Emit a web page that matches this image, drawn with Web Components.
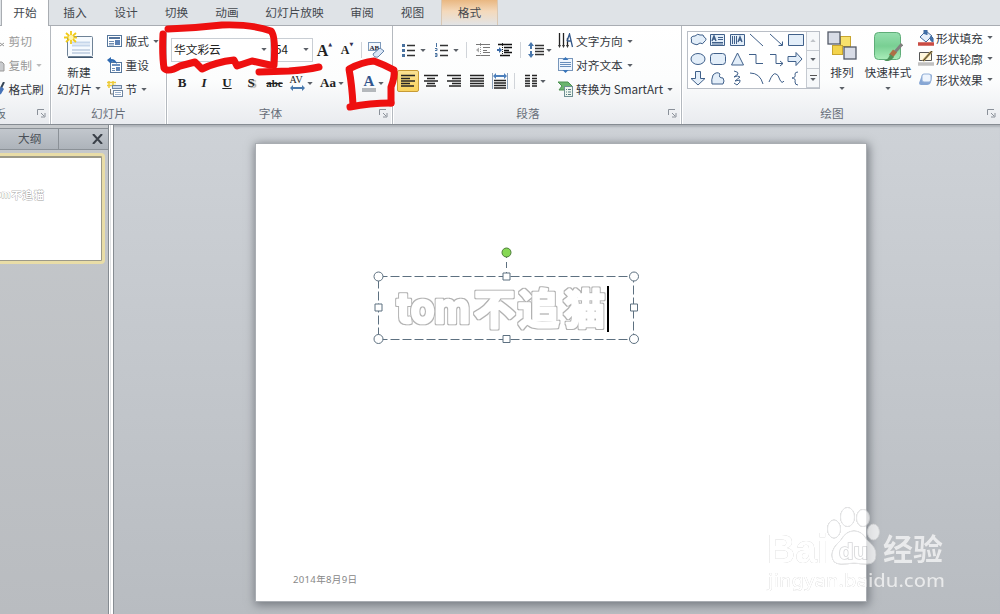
<!DOCTYPE html>
<html lang="zh-CN">
<head>
<meta charset="utf-8">
<title>PowerPoint</title>
<style>
  body {
    margin: 0;
    width: 1000px;
    height: 614px;
    overflow: hidden;
    font: 11.7px/16px "Noto Sans CJK SC", sans-serif;
    color: #3b3f45;
  }
</style>
</head>
<body>
<ppt-window></ppt-window>
<script>
'use strict';

// name: [width, height, markup]
const ICONS = {
  cut: [8, 14, '<path d="M0 9l4 3M0 12l4-3" stroke="#999"/>'],
  copy: [8, 14, '<path d="M-4 4h6l2 2v7h-8z" fill="#c9cbce" stroke="#999"/>'],
  brush: [8, 14, '<path d="M4 0L1 6" stroke="#345" stroke-width="2"/><path d="M-3 7l5-2 2 2-3 5-4 2z" fill="#4673b8"/>'],
  launcher: [9, 9, '<path d="M.5 6V.5H7M4 4l3 3M8 4v4H4" fill="none" stroke="#8a9099"/>'],
  newslide: [30, 28, '<rect x="3.5" y="5.5" width="25" height="20" rx="1" fill="#f6fafe" stroke="#6e8296"/><path d="M4 26.5h25" stroke="#40566e"/><path d="M8 11.5h18M8 14.5h18" stroke="#c6d6ea" stroke-width="2"/><path d="M8 19h18M8 22h18" stroke="#9eb3cf"/><path d="M7 0v13M0 6.5h13M2 2l10 9M12 2L2 11" stroke="#f2cb17" stroke-width="1.8"/><circle cx="7" cy="6.5" r="2.5" fill="#fff5b0"/>'],
  layout: [16, 14, '<rect x=".5" y="1.5" width="14" height="11" fill="#fff" stroke="#56779c"/><path d="M2 4h11" stroke="#54739b" stroke-width="2"/><path d="M2 7.5h5M2 9.5h5M2 11h5" stroke="#6f8db1"/><rect x="8" y="6" width="5" height="5" fill="#5d82b5"/>'],
  reset: [16, 16, '<rect x="3.5" y="5.5" width="11" height="10" fill="#fff" stroke="#56779c"/><path d="M5 8h8" stroke="#6d91bf" stroke-width="2"/><path d="M5 11.5h3M5 13.5h3" stroke="#6f8db1"/><rect x="9" y="10" width="4" height="4" fill="#6287b8"/><path d="M0 3l4-3v2q5 0 6 5-3-3-6-2v2z" fill="#2f6ab1"/>'],
  section: [16, 16, '<path d="M0 1.5h9M0 4.5h9M2 0v7M6 0v7" stroke="#edcb38" stroke-width="1.5"/><rect x="5.500" y="4.5" width="9" height="3" fill="#cfdcf0" stroke="#6e86a3"/><rect x="6.500" y="9.500" width="9" height="6" fill="#fff" stroke="#6e86a3"/><path d="M8 11.5h6M8 13.5h6" stroke="#9bb1cd"/><path d="M3.500 8v5H6" fill="none" stroke="#777"/>'],
  eraser: [18, 18, '<rect x=".5" y="1.500" width="12" height="8" fill="#f3f8fd" stroke="#7e9abb"/><text x="1.500" y="8.500" font-size="7" font-weight="bold" font-family="Liberation Serif" fill="#223">AB</text><path d="M5 13l7-6 4 3-6 6q-4 1-5-3z" fill="#dbe7f7" stroke="#6585aa"/>'],
  bullets: [14, 14, '<path d="M1 1h3v3H1zM1 6h3v3H1zM1 11h3v3H1z" fill="#48719f"/><path d="M6 2.500h8M6 7.500h8M6 12.500h8" stroke="#333" stroke-width="1.300"/>'],
  numbers: [14, 14, '<path d="M2.500 0v4M1 5.500h2v2H1M1 10.500h2v3H1M1 12h2" fill="none" stroke="#48719f"/><path d="M6 2.500h8M6 7.500h8M6 12.500h8" stroke="#333" stroke-width="1.300"/>'],
  outdent: [16, 14, '<path d="M1 1.500h14M8 4.500h7M8 7.500h4M8 9.500h7M1 12.500h14" stroke="#777"/><path d="M5.500 0v14" stroke="#999" stroke-dasharray="1 1"/><path d="M1 7l3-2.500v5z" fill="#aaa"/>'],
  indent: [16, 14, '<path d="M1 1.500h14M7 4.500h8M7 7.500h5M7 9.500h8M3 12.500h10" stroke="#111" stroke-width="1.700"/><path d="M5.500 0v14" stroke="#222" stroke-dasharray="1 1"/><path d="M5 7L2 4v2H0v2h2v2z" fill="#3d6ca8"/>'],
  spacing: [16, 16, '<path d="M3 0l3 4H4v3H2V4H0zM3 16l3-4H4V9H2v3H0z" fill="#4977ab"/><path d="M7 3.500h9M7 6.500h9M7 9.500h9M7 12.500h9" stroke="#333" stroke-width="1.300"/>'],
  left: [16, 14, '<path d="M1 1.500h14M1 4.500h9M1 7h14M1 9.500h9M1 12h13" stroke="#252525" stroke-width="1.500"/>'],
  center: [16, 14, '<path d="M1 1.500h14M4 4.500h8M1 7h14M4 9.500h8M3 12h10" stroke="#252525" stroke-width="1.500"/>'],
  right: [16, 14, '<path d="M1 1.500h14M6 4.500h9M1 7h14M6 9.500h9M3 12h12" stroke="#252525" stroke-width="1.500"/>'],
  justify: [16, 14, '<path d="M1 1.500h14M1 4.500h14M1 7h14M1 9.500h14M1 12h14" stroke="#252525" stroke-width="1.500"/>'],
  distribute: [16, 16, '<path d="M.5 0v16M15.500 0v16" stroke="#8ba1bb"/><path d="M1 3l3-3v2h8V0l3 3-3 3V4H4v2z" fill="#4b7fbc"/><path d="M2 7.500h12M2 10h12M2 12.500h12M2 15h12" stroke="#222" stroke-width="1.400"/>'],
  columns: [14, 14, '<path d="M1 1.500h5M1 4.500h5M1 7h5M1 9.500h5M1 12h5M8 1.500h5M8 4.500h5M8 7h5M8 9.500h5M8 12h5" stroke="#252525" stroke-width="1.500"/>'],
  direction: [16, 16, '<path d="M1.500 0v12M5.500 0v12M9.500 5v8" stroke="#222" stroke-width="1.300"/><path d="M0 12h3l-1.500 3zM4 12h3l-1.500 3zM8 12h3l-1.500 3z" fill="#333"/><path d="M9 8l2.500-7L14.500 14M9 8h4" fill="none" stroke="#34588a" stroke-width="1.300"/>'],
  align: [16, 16, '<rect x=".5" y="1.500" width="14" height="12" fill="#eef5fd" stroke="#7796bb"/><path d="M2 5.500h11M2 7.500h11M2 9.500h11" stroke="#668dbb"/><path d="M7.500 0l3 3h-6zM7.500 16l3-3h-6z" fill="#3976ba"/>'],
  smartart: [16, 16, '<path d="M0 1h10l4 4-3 4H1l3-4z" fill="#6ab56e" stroke="#4c9253"/><rect x="6.500" y="5.500" width="8" height="10" fill="#eef7ef" stroke="#6f8f94"/><path d="M8 8.500h1M10 8.500h3M8 11h1M10 11h3M8 13.500h1M10 13.500h3" stroke="#567b83"/>'],
  arrange: [30, 30, '<rect x="13.500" y="5.500" width="10" height="10" fill="#f8e16c" stroke="#c8a52e"/><rect x="5.500" y="14.500" width="10" height="9" fill="#f3d34b" stroke="#c8a52e"/><rect x="1" y="1" width="12" height="12" fill="#d8dce6" stroke="#545a68" stroke-width="1.300"/><rect x="17" y="16" width="12" height="12" fill="#d8dce6" stroke="#545a68" stroke-width="1.300"/>'],
  styles: [30, 30, '<defs><linearGradient id="g" x2="0" y2="1"><stop stop-color="#96dfaf"/><stop offset=".5" stop-color="#79cf93"/><stop offset="1" stop-color="#a9edb9"/></linearGradient></defs><rect x="1.500" y="1.500" width="26" height="27" rx="4" fill="url(#g)" stroke="#5fad78"/><path d="M29 13L22 21" stroke="#817f7d" stroke-width="3"/><path d="M22 20l-4 5" stroke="#ad6f45" stroke-width="5"/><path d="M11 30q5-2 6-7l4 3q-3 5-10 4z" fill="#4d9359"/>'],
  fill: [16, 16, '<path d="M2 7l6-6 6 5-6 6z" fill="#e6effa" stroke="#426a9d"/><path d="M6 4V0h3v5M13 6q3 1 2 6-3-1-3-4z" fill="#3e71ad" stroke="#426a9d"/><path d="M0 14h16" stroke="#c94b43" stroke-width="3.500"/>'],
  outline: [16, 16, '<path d="M1.500 1.500h12v8h-12z" fill="#fff8df" stroke="#555"/><path d="M14 0L5 10" stroke="#c0a45a" stroke-width="2.500"/><path d="M14 0L5 10" stroke="#3d3d3d"/><path d="M0 13h16" stroke="#c0c0c0" stroke-width="3.500"/>'],
  effect: [16, 16, '<path d="M1 11L4 3q1-1 3-1h5q2 0 2 2l-1 6q-1 3-4 3H3q-2 0-2-2z" fill="#86a6d4"/><rect x="4" y="2" width="9" height="8" rx="2" fill="#edf4fd" stroke="#93b0d8"/>']
};

const GALLERY = [
  '<path d="M4 12q-4-1-2.500-4Q0 4 5 4q3-3 5-1 4-1 4 2 4 2 0 5-1 3-4 1-3 3-6 1z"/>',
  '<path d="M1.500 2.500h14v11h-14z"/><path d="M9 5.500h5M9 7.500h5M3 10.500h11M3 12h11"/><path d="M3 9l2-5 2 5M4 7h2" stroke-width="1.400"/>',
  '<path d="M1.500 2.500h14v11h-14z"/><path d="M3.500 4v8M5.500 4v8M7.500 4v8"/><path d="M9 10l2-5 2 5M10 8h2" stroke-width="1.400"/>',
  '<path d="M2 2l13 12"/>',
  '<path d="M2 2l12 11M14.500 9.500v4h-4"/>',
  '<path d="M1.500 2.500h15v11h-15z"/>',
  '<ellipse cx="8" cy="8" rx="7" ry="5.500"/>',
  '<rect x="1.500" y="2.500" width="15" height="11" rx="3"/>',
  '<path d="M8.500 2l6 12h-12z"/>',
  '<path d="M1 3.500h7v9h7" fill="none"/>',
  '<path d="M2 3.500h6v9h7M12 10l3 2.500-3 2.500" fill="none"/>',
  '<path d="M1 5.500h8V1.500L15 8l-6 6.500v-4H1z"/>',
  '<path d="M5.500 1.500h5v7H15L8 15 1 8.500h4.500z"/>',
  '<path d="M3 14q-1-4 1-9 4-4 7-1-2 4 3 4 2 3 0 6z"/>',
  '<path d="M5 1q5 1 4 3L5 7q4-2 6 0L6 11l5-1q1 2-3 5l-3-2" fill="none"/>',
  '<path d="M2 3q10 0 13 11" fill="none"/>',
  '<path d="M1 12q4-10 7-8 2 0 4 6 2 4 4 1" fill="none"/>',
  '<path d="M11 2q-3 0-3 2 1 4-3 4 4 0 3 4 0 3 3 3" fill="none"/>'
];

class UiIcon extends HTMLElement {
  constructor() {
    super();
    this.root = this.attachShadow({mode: 'open'});
  }
  connectedCallback() {
    const [w, h, markup] = ICONS[this.getAttribute('name')];
    this.root.innerHTML = `
  <style>
    :host { display: inline-block; flex: none; width: ${w}px; height: ${h}px; }
    svg { display: block; }
  </style>
  <svg width="${w}" height="${h}" fill="none">${markup}</svg>
    `;
  }
}
customElements.define('ui-icon', UiIcon);

class DropArrow extends HTMLElement {
  constructor() {
    super();
    this.attachShadow({mode: 'open'}).innerHTML = `
  <style>
    :host {
      display: flex;
      flex: none;
      width: 6px;
    }
    svg { display: block; fill: var(--arrow, #5b6067); }
  </style>
  <svg width="6" height="3"><path d="M.3 0h5.400L3 3z"/></svg>
    `;
  }
}
customElements.define('drop-arrow', DropArrow);

class RibbonTab extends HTMLElement {
  constructor() {
    super();
    this.attachShadow({mode: 'open'}).innerHTML = `
  <style>
    :host {
      display: flex;
      justify-content: center;
      box-sizing: border-box;
      height: 25px;
      padding-top: 4px;
      color: #44484e;
    }
    :host([active]) {
      height: 26px;
      background: #fff;
      border: solid #a9adb2;
      border-width: 0 1px;
      margin-left: 1px;
    }
    :host([context]) {
      background: linear-gradient(#e9b781, #f4d9bb 45%, #e2e4e6);
      border: solid #d9c8b4;
      border-width: 0 1px;
      margin-left: 3px;
    }
  </style>
  <slot></slot>
    `;
  }
}
customElements.define('ribbon-tab', RibbonTab);

class RibbonGroup extends HTMLElement {
  constructor() {
    super();
    this.root = this.attachShadow({mode: 'open'});
  }
  connectedCallback() {
    this.root.innerHTML = `
  <style>
    :host {
      display: grid;
      grid-template-rows: 79px 16px;
      box-sizing: border-box;
      flex: none;
      height: 98px;
      border-right: 1px solid #b4b9bf;
      box-shadow: inset -1px 0 #fff, 1px 0 #fff;
    }
    :host(:last-child) { border-right: 0; box-shadow: none; }
    .body { display: flex; }
    footer {
      display: grid;
      grid-template-columns: 1fr 13px;
      align-items: center;
      color: #666d78;
    }
    .label { text-align: center; white-space: nowrap; padding-right: 5px; }
    :host([plain]) .label { padding: 0; }
    :host([plain]) footer { grid-template-columns: 1fr; }
    :host([plain]) ui-icon { display: none; }
    :host([clipped]) footer { grid-template-columns: 37px 1fr; }
    :host([clipped]) .label { direction: rtl; width: 6px; padding: 0; }
  </style>
  <div class="body"><slot></slot></div>
  <footer>
    <span class="label">${this.getAttribute('label')}</span>
    <ui-icon name="launcher"></ui-icon>
  </footer>
    `;
  }
}
customElements.define('ribbon-group', RibbonGroup);

class SmallButton extends HTMLElement {
  constructor() {
    super();
    this.root = this.attachShadow({mode: 'open'});
  }
  connectedCallback() {
    this.root.innerHTML = `
  <style>
    :host { display: flex; align-items: center; height: 24px; white-space: nowrap; color: #33373d; }
    :host([disabled]) { color: #999; --arrow: #bbb; }
    .icon { display: flex; width: var(--icon-width, 18.5px); }
    drop-arrow { margin-left: 4px; }
  </style>
  <span class="icon"><ui-icon name="${this.getAttribute('icon')}"></ui-icon></span>
  <slot></slot>
  ${this.hasAttribute('arrow') ? '<drop-arrow></drop-arrow>' : ''}
    `;
  }
}
customElements.define('small-button', SmallButton);

class LargeButton extends HTMLElement {
  constructor() {
    super();
    this.root = this.attachShadow({mode: 'open'});
  }
  connectedCallback() {
    this.root.innerHTML = `
  <style>
    :host {
      display: flex;
      flex-direction: column;
      align-items: center;
      padding-top: 5px;
      white-space: nowrap;
      color: #33373d;
    }
    .icon { height: 33px; }
    .last { display: flex; align-items: center; gap: 3px; height: 17px; }
  </style>
  <span class="icon"><ui-icon name="${this.getAttribute('icon')}"></ui-icon></span>
  <slot></slot>
  <span class="last"><slot name="second"></slot><drop-arrow></drop-arrow></span>
    `;
  }
}
customElements.define('large-button', LargeButton);

class FontTools extends HTMLElement {
  constructor() {
    super();
    this.attachShadow({mode: 'open'}).innerHTML = `
  <style>
    :host { display: block; padding: 12px 0 0 4px; color: #222; }
    .row { display: grid; align-items: center; height: 22px; }
    .first { grid-template-columns: 100px 42px 23px 22px 7px 24px; }
    .second {
      grid-template-columns: 22px 22px 24px 24px 23px 30px 32px 9px 32px;
      height: 24px;
      margin-top: 11px;
      font: bold 13px/16px "Liberation Serif", serif;
    }
    .row > * { justify-self: center; }
    .box {
      display: flex;
      justify-self: stretch;
      justify-content: space-between;
      align-items: center;
      box-sizing: border-box;
      height: 24px;
      padding: 0 3px 2px 2px;
      border: 1px solid #c9ced4;
      background: #fff;
    }
    .size { margin-left: -1px; padding-left: 4px; }
    .grow, .shrink { display: flex; font: bold 16px/19px "Liberation Serif", serif; }
    .shrink { font-size: 12px; }
    sup { font: 5px/7px "DejaVu Sans"; color: #335; }
    .sep { width: 1px; height: 16px; background: #d0d4d9; }
    .sub { display: flex; align-items: center; gap: 2px; }
    .shadow { text-shadow: 2px 1px 1px #999; }
    .strike { font-size: 11px; text-decoration: line-through; }
    .av { display: grid; font-size: 10px; line-height: 10px; font-weight: normal; }
    .color { line-height: 13px; font-size: 15px; color: #31558d; border-bottom: 4px solid #b4b8bc; padding: 0 2px; }
  </style>
  <div class="row first">
    <span class="box">华文彩云<drop-arrow></drop-arrow></span>
    <span class="box size">54<drop-arrow></drop-arrow></span>
    <span class="grow">A<sup>▲</sup></span>
    <span class="shrink">A<sup>▼</sup></span>
    <span class="sep"></span>
    <ui-icon name="eraser"></ui-icon>
  </div>
  <div class="row second">
    <span>B</span>
    <i>I</i>
    <u>U</u>
    <span class="shadow">S</span>
    <span class="strike">abc</span>
    <span class="sub">
      <span class="av">AV<svg width="15" height="6"><path d="M0 3l3-3v2h9V0l3 3-3 3V4H3v2z" fill="#4778ac"/></svg></span>
      <drop-arrow></drop-arrow>
    </span>
    <span class="sub">Aa<drop-arrow></drop-arrow></span>
    <span></span>
    <span class="sub"><span class="color">A</span><drop-arrow></drop-arrow></span>
  </div>
    `;
  }
}
customElements.define('font-tools', FontTools);

class ParagraphTools extends HTMLElement {
  constructor() {
    super();
    this.attachShadow({mode: 'open'}).innerHTML = `
  <style>
    :host { display: block; width: 160px; padding-top: 12px; }
    .row { display: grid; align-items: center; height: 24px; }
    .first { grid-template-columns: 33px 32px 9px 23px 21px 10px 30px; padding-left: 4px; }
    .second { grid-template-columns: 22px 23px 23px 23px 23px 7px 33px; padding-left: 4px; margin-top: 7px; }
    .row > * { justify-self: center; }
    .sub { display: flex; align-items: center; gap: 5px; }
    .near { gap: 2px; }
    .sep { width: 1px; height: 16px; background: #d0d4d9; }
    .on {
      padding: 3px 2px;
      border: 1px solid #c79b36;
      border-radius: 2px;
      background: linear-gradient(#fae193, #f9d35d);
      line-height: 0;
    }
  </style>
  <div class="row first">
    <span class="sub"><ui-icon name="bullets"></ui-icon><drop-arrow></drop-arrow></span>
    <span class="sub"><ui-icon name="numbers"></ui-icon><drop-arrow></drop-arrow></span>
    <span class="sep"></span>
    <ui-icon name="outdent"></ui-icon>
    <ui-icon name="indent"></ui-icon>
    <span class="sep"></span>
    <span class="sub near"><ui-icon name="spacing"></ui-icon><drop-arrow></drop-arrow></span>
  </div>
  <div class="row second">
    <span class="on"><ui-icon name="left"></ui-icon></span>
    <ui-icon name="center"></ui-icon>
    <ui-icon name="right"></ui-icon>
    <ui-icon name="justify"></ui-icon>
    <ui-icon name="distribute"></ui-icon>
    <span class="sep"></span>
    <span class="sub near"><ui-icon name="columns"></ui-icon><drop-arrow></drop-arrow></span>
  </div>
    `;
  }
}
customElements.define('paragraph-tools', ParagraphTools);

class ShapeGallery extends HTMLElement {
  constructor() {
    super();
    this.attachShadow({mode: 'open'}).innerHTML = `
  <style>
    :host {
      display: flex;
      box-sizing: border-box;
      width: 133px;
      height: 58px;
      margin: 5px 0 0 5px;
      border: 1px solid #b9bec6;
      background: #fff;
    }
    .shapes { display: grid; grid-template: repeat(3, 19px) / repeat(6, 19.4px); padding-left: 2px; }
    .shapes svg { width: 18px; height: 17px; fill: #e3eef9; stroke: #40608a; }
    .scroll { display: grid; grid-template-rows: repeat(3, 1fr); width: 14px; margin-left: auto; }
    .scroll span { display: grid; place-content: center; justify-items: center; gap: 2px; border: solid #c5cad1; border-width: 0 0 1px 1px; background: #f6f8fa; }
    .up { transform: rotate(180deg); --arrow: #c0c4c9; }
    hr { width: 7px; margin: 0; border: 0; border-top: 1px solid #555; }
  </style>
  <div class="shapes">${GALLERY.map(shape => `<svg>${shape}</svg>`).join('')}</div>
  <div class="scroll">
    <span><drop-arrow class="up"></drop-arrow></span>
    <span><drop-arrow></drop-arrow></span>
    <span><hr><drop-arrow></drop-arrow></span>
  </div>
    `;
  }
}
customElements.define('shape-gallery', ShapeGallery);

class PptRibbon extends HTMLElement {
  constructor() {
    super();
    this.attachShadow({mode: 'open'}).innerHTML = `
  <style>
    :host { display: block; height: 125px; box-sizing: border-box; border-bottom: 1px solid #868c93; }
    nav { display: flex; height: 25px; background: #dfe3e7; border-bottom: 1px solid #a9adb3; }
    .groups { display: flex; height: 98px; background: linear-gradient(#fff, #fcfdfd 55%, #e9ebef); }
    .stack { padding-top: 3px; }
    .draw { padding-top: 1px; }
    .draw small-button { height: 21px; }
    .clip small-button { --icon-width: 8.5px; }
  </style>
  <nav>
    <ribbon-tab active style="width:48px">开始</ribbon-tab>
    <ribbon-tab style="width:52px">插入</ribbon-tab>
    <ribbon-tab style="width:50px">设计</ribbon-tab>
    <ribbon-tab style="width:51px">切换</ribbon-tab>
    <ribbon-tab style="width:50px">动画</ribbon-tab>
    <ribbon-tab style="width:85px">幻灯片放映</ribbon-tab>
    <ribbon-tab style="width:50px">审阅</ribbon-tab>
    <ribbon-tab style="width:51px">视图</ribbon-tab>
    <ribbon-tab context style="width:57px">格式</ribbon-tab>
  </nav>
  <div class="groups">
    <ribbon-group clipped label="板" style="width:51px">
      <div class="stack clip">
        <small-button disabled icon="cut">剪切</small-button>
        <small-button disabled icon="copy" arrow>复制</small-button>
        <small-button icon="brush">格式刷</small-button>
      </div>
    </ribbon-group>
    <ribbon-group plain label="幻灯片" style="width:116px">
      <large-button icon="newslide" style="width:56px">新建<span slot="second">幻灯片</span></large-button>
      <div class="stack">
        <small-button icon="layout" arrow>版式</small-button>
        <small-button icon="reset">重设</small-button>
        <small-button icon="section" arrow>节</small-button>
      </div>
    </ribbon-group>
    <ribbon-group label="字体" style="width:226px">
      <font-tools></font-tools>
    </ribbon-group>
    <ribbon-group label="段落" style="width:289px">
      <paragraph-tools></paragraph-tools>
      <div class="stack" style="padding-left:4.500px">
        <small-button icon="direction" arrow>文字方向</small-button>
        <small-button icon="align" arrow>对齐文本</small-button>
        <small-button icon="smartart" arrow>转换为 SmartArt</small-button>
      </div>
    </ribbon-group>
    <ribbon-group label="绘图" style="width:318px">
      <shape-gallery></shape-gallery>
      <large-button icon="arrange" style="width:44px">排列</large-button>
      <large-button icon="styles" style="width:48px">快速样式</large-button>
      <div class="draw" style="padding-left:5.500px">
        <small-button icon="fill" arrow>形状填充</small-button>
        <small-button icon="outline" arrow>形状轮廓</small-button>
        <small-button icon="effect" arrow>形状效果</small-button>
      </div>
    </ribbon-group>
  </div>
    `;
  }
}
customElements.define('ppt-ribbon', PptRibbon);

// Hollow lettering: the grown silhouette in grey, the glyphs in white over it
class HollowWord extends HTMLElement {
  constructor() {
    super();
    this.attachShadow({mode: 'open'}).innerHTML = `
  <style>
    :host { display: block; }
    svg { display: block; overflow: visible; }
    text {
      fill: #fff;
      stroke: #fff;
      stroke-width: 2.6px;
      stroke-linejoin: round;
      font-weight: 700;
    }
    .latin { font-family: Inter, sans-serif; font-size: 42px; }
    .han { font-family: "Noto Sans CJK SC", sans-serif; font-size: 41px; }
    :host([small]) text { fill: #fff; stroke: #a4a4a4; stroke-width: 3px; paint-order: stroke; }
    :host([small]) g { filter: none; }
  </style>
  <svg width="212" height="46" viewBox="0 0 212 46">
    <filter id="rim" x="-5%" y="-20%" width="110%" height="140%">
      <feMorphology in="SourceAlpha" operator="dilate" radius="1" result="grown"/>
      <feFlood flood-color="#b2b2b2"/>
      <feComposite in2="grown" operator="in" result="rim"/>
      <feMerge><feMergeNode in="rim"/><feMergeNode in="SourceGraphic"/></feMerge>
    </filter>
    <g filter="url(#rim)">
      <text class="latin" x="4" y="37" textLength="73" lengthAdjust="spacingAndGlyphs">tom</text>
      <text class="han" x="81" y="38">不</text>
      <text class="han" x="125" y="38">追</text>
      <text class="han" x="171" y="38">猫</text>
    </g>
  </svg>
    `;
  }
}
customElements.define('hollow-word', HollowWord);

class SlidePanel extends HTMLElement {
  constructor() {
    super();
    this.attachShadow({mode: 'open'}).innerHTML = `
  <style>
    :host {
      display: flex;
      flex-direction: column;
      box-sizing: border-box;
      width: 114px;
      padding-top: 3px;
      border-right: 1px solid #868c92;
      background: linear-gradient(90deg, transparent 108px, #858b91 108px 109px, #fff 109px 110px, #dfe1e3 110px 111px, #fff 111px 113px), linear-gradient(#c6c9cc, #b9bcc0);
    }
    header { display: flex; box-sizing: border-box; width: 108px; height: 22px; border: solid #8b9197; border-width: 1px 0; background: linear-gradient(#c2c7cd, #adb3ba); }
    .tab { box-sizing: border-box; width: 59px; padding: 1px 0 0 18px; border-right: 1px solid #8b9197; color: #4b5158; }
    .close { margin: 5px 0 0 33px; }
    .thumb {
      box-sizing: border-box;
      width: 102px;
      height: 105px;
      margin-top: 6px;
      padding-top: 31px;
      border: 1px solid #9d9a88;
      border-width: 2px 1px 1px 0;
      outline: 3px solid #e9dda7;
      border-radius: 0 1px 1px 0;
      background: #fff;
    }
    hollow-word { transform: translateX(-9px) scale(.25); transform-origin: 0 0; }
  </style>
  <header>
    <span class="tab">大纲</span>
    <svg class="close" width="11" height="10"><path d="M1 0l9 10M10 0L1 10" stroke="#3b4149" stroke-width="2"/></svg>
  </header>
  <div class="thumb"><hollow-word small></hollow-word></div>
    `;
  }
}
customElements.define('slide-panel', SlidePanel);

class SlideCanvas extends HTMLElement {
  constructor() {
    super();
    this.attachShadow({mode: 'open'}).innerHTML = `
  <style>
    :host { display: block; flex: 1; padding: 19px 0 0 142px; }
    .slide {
      position: relative;
      width: 610px;
      height: 457px;
      background: #fff;
      box-shadow: 0 0 0 1px #a9adb2, 1px 2px 9px 2px #74797f;
    }
    .frame { position: absolute; left: 116px; top: 101px; }
    hollow-word { position: absolute; left: 137px; top: 142px; }
    .date { position: absolute; left: 37px; bottom: 13px; font: 9.600px/16px "Noto Sans", "Noto Sans CJK SC", sans-serif; color: #888; letter-spacing: .3px; }
  </style>
  <div class="slide">
    <svg class="frame" width="270" height="100" fill="#fff" stroke="#5d7080">
      <path d="M134.500 7v23" stroke-dasharray="6 4"/>
      <rect x="6.500" y="31.500" width="255" height="63" fill="none" stroke-dasharray="9 3"/>
      <circle cx="134.500" cy="7.500" r="4.500" fill="#86d854" stroke="#4d7d39"/>
      <circle cx="6.500" cy="31.500" r="4.500"/><circle cx="262" cy="31.500" r="4.500"/>
      <circle cx="6.500" cy="94" r="4.500"/><circle cx="262" cy="94" r="4.500"/>
      <path d="M131 28h7v7h-7zM131 90.500h7v7h-7zM3 59h7v7H3zM258.500 59h7v7h-7z"/>
      <path d="M236 41v46" stroke="#000" stroke-width="2"/>
    </svg>
    <hollow-word></hollow-word>
    <span class="date">2014年8月9日</span>
  </div>
    `;
  }
}
customElements.define('slide-canvas', SlideCanvas);

class BaiduMark extends HTMLElement {
  constructor() {
    super();
    this.attachShadow({mode: 'open'}).innerHTML = `
  <style>
    :host { display: block; }
    svg { display: block; opacity: .68; filter: drop-shadow(0 0 .7px #999); }
    text { fill: #fff; font-family: "Liberation Sans", sans-serif; font-weight: 700; }
    .han { font-family: "Noto Sans CJK SC", sans-serif; }
    .url { font-family: "Noto Sans", sans-serif; font-weight: 500; }
    .paw { fill: #fff; stroke: #dcdddf; }
    .du { stroke: #c3c5c8; stroke-width: 1.500px; paint-order: stroke; }
  </style>
  <svg width="190" height="90">
    <text x="2" y="57.500" font-size="40" textLength="61" lengthAdjust="spacingAndGlyphs">Bai</text>
    <g class="paw">
      <ellipse cx="69" cy="24" rx="6.500" ry="9"/>
      <ellipse cx="82.500" cy="12" rx="7" ry="9.500"/>
      <ellipse cx="98" cy="13" rx="6.500" ry="8.500"/>
      <ellipse cx="108.500" cy="27" rx="6" ry="8"/>
      <path d="M89 26q8 0 13 9 10 8 9 15 0 9-9 9-6 0-13-1-7 1-13 1-9 0-9-9 0-7 9-15 5-9 13-9z"/>
    </g>
    <text class="du" x="74" y="54" font-size="22" textLength="29" lengthAdjust="spacingAndGlyphs">du</text>
    <text class="han" x="118" y="55" font-size="30" textLength="60" lengthAdjust="spacingAndGlyphs">经验</text>
    <text class="url" x="3" y="81.500" font-size="18" textLength="177" lengthAdjust="spacingAndGlyphs">jingyan.baidu.com</text>
  </svg>
    `;
  }
}
customElements.define('baidu-mark', BaiduMark);

// Red marker strokes over the font box and the font colour button
class RedMarker extends HTMLElement {
  constructor() {
    super();
    this.attachShadow({mode: 'open'}).innerHTML = `
  <style>
    :host { display: block; pointer-events: none; }
    svg { display: block; }
    path { fill: none; stroke: #ee1010; stroke-width: 7; stroke-linecap: round; stroke-linejoin: round; }
  </style>
  <svg width="420" height="120">
    <path d="M168 29Q196 28 222 25 252 24 271 31 276 36 274 65"/>
    <path d="M163 34Q162 55 164 68 168 73 180 66L195 62 202 69Q216 62 234 60L237 66 252 61 270 65"/>
    <path d="M259 72L289 71Q306 70 319 67"/>
    <path d="M353 105Q352 85 349 69 362 62 374 61 385 65 394 70 395 77 391 87L391 103"/>
    <path d="M350 107Q370 103 391 103"/>
  </svg>
    `;
  }
}
customElements.define('red-marker', RedMarker);

class PptWindow extends HTMLElement {
  constructor() {
    super();
    this.attachShadow({mode: 'open'}).innerHTML = `
  <style>
    :host { display: block; position: relative; width: 1000px; height: 614px; overflow: hidden; }
    main { display: flex; height: 489px; background: linear-gradient(#ced2d7, #b8bcc1); box-shadow: inset 0 3px 2px -1px #aeb3b9; }
    baidu-mark { position: absolute; left: 765px; top: 505px; }
    red-marker { position: absolute; left: 0; top: 0; }
  </style>
  <ppt-ribbon></ppt-ribbon>
  <main>
    <slide-panel></slide-panel>
    <slide-canvas></slide-canvas>
  </main>
  <baidu-mark></baidu-mark>
  <red-marker></red-marker>
    `;
  }
}
customElements.define('ppt-window', PptWindow);
</script>
</body>
</html>
